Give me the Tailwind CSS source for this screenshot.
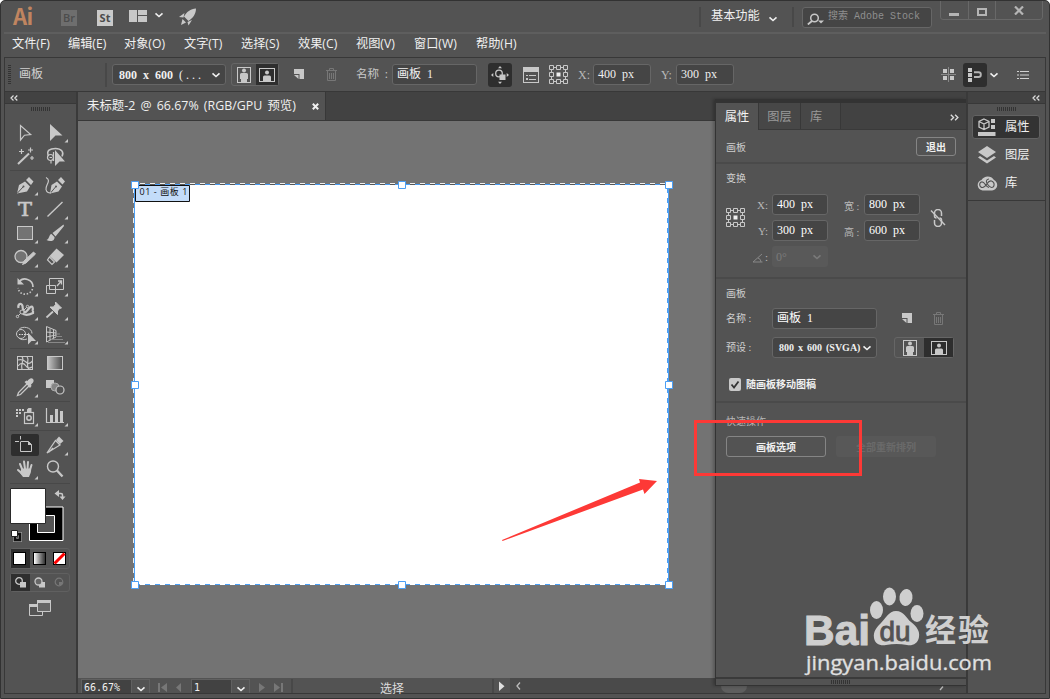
<!doctype html>
<html lang="zh-CN">

<head>
  <meta charset="utf-8">
  <title>未标题-2</title>
  <script src="https://cdn.jsdelivr.net/npm/@tailwindcss/browser@4"></script>
</head>

<body class="bg-white overflow-hidden">
  <!-- shared icons -->
  <svg class="hidden">
    <symbol id="corner" viewBox="0 0 30 24"><path d="M28 19v3.500h-3.500z" fill="#c8c8c8" /></symbol>
    <symbol id="chevron" viewBox="0 0 10 8"><path d="M1.500 2.300L5 5.500l3.500-3.200" fill="none" stroke="currentColor" stroke-width="1.600" /></symbol>
    <symbol id="dbl" viewBox="0 0 8 8"><path d="M3.500 1.500L1 4l2.500 2.500M7.300 1.500L4.800 4l2.500 2.500" fill="none" stroke="currentColor" stroke-width="1.200" /></symbol>
    <symbol id="grip" viewBox="0 0 20 4"><path d="M.5 0v4M2.500 0v4M4.500 0v4M6.500 0v4M8.500 0v4M10.500 0v4M12.500 0v4M14.500 0v4M16.500 0v4M18.500 0v4" stroke="#333" /></symbol>
    <symbol id="portrait" viewBox="0 0 14 16"><rect x=".5" y=".5" width="13" height="15" fill="none" stroke="currentColor" /><circle cx="7" cy="3.500" r="2" fill="currentColor" /><path d="M3 7.500q0-1.500 1.500-1.500h5Q11 6 11 7.500V12H10v3.500H4V12H3z" fill="currentColor" /></symbol>
    <symbol id="landscape" viewBox="0 0 16 14"><rect x=".5" y=".5" width="15" height="13" fill="none" stroke="currentColor" /><circle cx="8" cy="4.500" r="2" fill="currentColor" /><path d="M4 13V9Q4 7.500 5.500 7.500h5Q12 7.500 12 9v4z" fill="currentColor" /></symbol>
    <symbol id="new" viewBox="0 0 10 10"><path d="M0 0h10v10H5.500V5H0z" fill="#c8c8c8" /><path d="M0 6h4.500v4z" fill="#c8c8c8" /></symbol>
    <symbol id="trash" viewBox="0 0 11 13"><path d="M0 2.500h11M3.500 2.500v-2h4v2M1.500 3v9.500h8V3M3.500 5v6M5.500 5v6M7.500 5v6" fill="none" stroke="#777" /></symbol>
    <symbol id="ref" viewBox="0 0 19 19"><path d="M2.500 2.500h14v14h-14z" fill="none" stroke="#c8c8c8" stroke-width="1" /><g fill="#535353" stroke="#c8c8c8"><path d="M.5.500h4v4h-4zM7.500.500h4v4h-4zM14.500.500h4v4h-4zM.5 7.500h4v4h-4zM14.500 7.500h4v4h-4zM.5 14.500h4v4h-4zM7.500 14.500h4v4h-4zM14.500 14.500h4v4h-4z" /></g><path d="M7.500 7.500h4v4h-4z" fill="#f0f0f0" /></symbol>
  </svg>

  <div class="relative w-[1050px] h-[699px] bg-[#535353] border border-[#323232] rounded-t-[5px] overflow-hidden flex flex-col text-[12px] leading-none text-[#f0f0f0] font-['Open_Sans','Noto_Sans_CJK_SC',sans-serif] whitespace-nowrap">

    <!-- title bar -->
    <header class="h-[31px] shrink-0 flex items-center pl-3">
      <div class="w-5 -mt-1 text-[22px] leading-[28px] font-bold text-[#c08560] font-['Noto_Sans_CJK_SC',sans-serif] tracking-[-0.5px]">Ai</div>
      <div class="ml-7 mt-0.5 w-4 h-4 bg-[#6e6e6e] text-[#4c4c4c] font-semibold text-[11px] flex items-center justify-center">Br</div>
      <div class="ml-5 mt-0.5 w-4 h-4 bg-[#cacaca] text-[#4c4c4c] font-bold text-[11px] flex items-center justify-center">St</div>
      <svg class="ml-4 -mt-0.5 w-[18px] h-3" viewBox="0 0 18 12"><path d="M0 0h8v12H0zM9 0h9v5H9zM9 6h9v6H9z" fill="#c8c8c8" /></svg>
      <svg class="ml-[7px] -mt-1 w-2.5 h-2 text-[#eee]"><use href="#chevron" /></svg>
      <svg class="ml-[15px] w-[18px] h-[18px]" viewBox="0 0 18 18"><path d="M17 .5C11.500 1 7.500 4 5 8.500L9.500 13C14 10 17 6 17 .5zM5.500 5L0 9l4.500 .5zM13 12L9.500 17.500 8.500 14zM3.500 11l3.500 3.500-5 2.500z" fill="#c8c8c8" /></svg>
      <div class="ml-auto flex items-center self-stretch">
        <div class="w-0.5 h-5 bg-[#484848]"></div>
        <div class="ml-2.5 w-[49px] text-[12.200px]">基本功能</div>
        <svg class="ml-2 mt-1 w-2.5 h-2 text-[#eee]"><use href="#chevron" /></svg>
        <div class="ml-3.5 w-0.5 h-5 bg-[#484848]"></div>
        <div class="ml-2 mt-0.5 w-[130px] h-[21px] rounded-[3px] border border-[#666] bg-[#454545] flex items-center pl-1 pb-0.5 text-[10px] text-[#8f8f8f] font-['Liberation_Mono','Noto_Sans_CJK_SC',monospace]">
          <svg class="w-[17px] h-3 mr-1 mt-1" viewBox="0 0 17 12"><circle cx="7.500" cy="5" r="3.800" fill="none" stroke="#c8c8c8" stroke-width="1.500" /><path d="M5 8L.8 11.500" stroke="#c8c8c8" stroke-width="1.800" /><path d="M11 7.500h6l-3 3z" fill="#c8c8c8" /></svg>
          搜索 Adobe Stock
        </div>
        <div class="ml-2 mr-[6px] self-start w-[103px] h-5 -mt-px rounded-b-[3px] border border-[#686868] flex">
          <div class="w-[28px] border-r border-[#686868] pt-3 pl-2"><div class="w-2.5 h-[3px] bg-[#b5b5b5]"></div></div>
          <div class="w-[27px] border-r border-[#686868] pt-[7px] pl-2"><div class="w-2.5 h-2 border-2 border-[#b5b5b5]"></div></div>
          <svg class="ml-[18px] mt-[5px] w-2.5 h-[9px]" viewBox="0 0 10 9"><path d="M1 .5l8 8M9 .5l-8 8" stroke="#b5b5b5" stroke-width="2.200" /></svg>
        </div>
      </div>
    </header>

    <!-- menus -->
    <nav class="h-[25px] mx-[3px] shrink-0 border-t-2 border-[#5e5e5e] flex items-center pl-2 pb-0.5 text-[12.200px]">
      <div class="w-[56px]">文件(F)</div>
      <div class="w-[56px]">编辑(E)</div>
      <div class="w-[60px]">对象(O)</div>
      <div class="w-[57px]">文字(T)</div>
      <div class="w-[57px]">选择(S)</div>
      <div class="w-[58px]">效果(C)</div>
      <div class="w-[58px]">视图(V)</div>
      <div class="w-[62px]">窗口(W)</div>
      <div>帮助(H)</div>
    </nav>

    <!-- control bar -->
    <div class="mx-[3px] h-[34px] shrink-0 border border-b-0 border-[#383838] flex items-center pl-[3px] text-[12px] font-['Liberation_Serif','Noto_Sans_CJK_SC',serif] [word-spacing:3px]">
      <svg class="w-[3px] h-5" viewBox="0 0 3 20"><path d="M1.500 0v20" stroke="#333" stroke-width="3" stroke-dasharray="1 1" /></svg>
      <div class="ml-2 w-[86px] text-[#d0d0d0] -mt-0.5">画板</div>
      <div class="w-0.5 h-6 bg-[#484848]"></div>
      <div class="ml-[5px] w-[114px] h-[21px] rounded-[3px] border border-[#666] bg-[#454545] flex items-center justify-between pl-1.5 pr-1 font-bold">
        <span>800 x 600 <span class="tracking-[3px] font-normal">(...</span></span>
        <svg class="w-2.5 h-2"><use href="#chevron" /></svg>
      </div>
      <div class="ml-[5px] w-12 h-[23px] rounded-[3px] border border-[#666] flex text-[#c8c8c8]">
        <div class="w-6 flex items-center justify-center"><svg class="w-3.5 h-4"><use href="#portrait" /></svg></div>
        <div class="grow bg-[#2e2e2e] flex items-center justify-center"><svg class="w-4 h-3.5"><use href="#landscape" /></svg></div>
      </div>
      <svg class="ml-[15px] -mt-px w-2.5 h-2.5"><use href="#new" /></svg>
      <svg class="ml-[22px] w-[11px] h-[13px]"><use href="#trash" /></svg>
      <div class="ml-[19px] w-[36px] text-[11.500px] text-[#c8c8c8]">名称 :</div>
      <div class="w-[85px] h-[21px] rounded-[3px] border border-[#666] bg-[#454545] flex items-center pl-1 pb-0.5">画板 1</div>
      <div class="ml-[11px] w-6 h-6 rounded-[3px] bg-[#2e2e2e] flex items-center justify-center">
        <svg class="w-[18px] h-[18px]" viewBox="0 0 18 18" fill="#c8c8c8"><circle cx="8" cy="7.500" r="3.300" fill="none" stroke="#c8c8c8" stroke-width="1.300" /><path d="M8.500 8.500H14.500V14H8.500zM0 9l2.300-2v4zM18 9l-2.300-2v4zM9 0l2 2.300H7zM9 18l2-2.300H7z" /></svg>
      </div>
      <svg class="ml-[11px] w-4 h-4" viewBox="0 0 16 16"><rect x=".5" y=".5" width="15" height="15" fill="none" stroke="#c8c8c8" /><path d="M0 0h16v5H0zM3 8h2v1H3zM3 11h2v2H3zM6 8h7v1H6zM6 12h7v1H6z" fill="#c8c8c8" /></svg>
      <svg class="ml-2.5 w-[19px] h-[19px]"><use href="#ref" /></svg>
      <div class="ml-2.5 w-[15px] text-[#b8b8b8]">X:</div>
      <div class="w-[58px] h-[21px] rounded-[3px] border border-[#666] bg-[#454545] flex items-center pl-1 pb-0.5">400 px</div>
      <div class="ml-2.5 w-[15px] text-[#b8b8b8]">Y:</div>
      <div class="w-[58px] h-[21px] rounded-[3px] border border-[#666] bg-[#454545] flex items-center pl-1 pb-0.5">300 px</div>
      <div class="ml-auto flex items-center pr-4">
        <svg class="w-[15px] h-[15px]" viewBox="0 0 15 15"><path d="M7.500 0v15M0 7.500h15" stroke="#888" /><path d="M2 2h4v4H2zM9 2h4v4H9zM2 9h4v4H2zM9 9h4v4H9z" fill="#c8c8c8" /></svg>
        <div class="ml-[7px] w-6 h-6 rounded-[3px] bg-[#2e2e2e] flex items-center justify-center">
          <svg class="w-4 h-[14px]" viewBox="0 0 16 14"><path d="M1 0h4v4H1zM1 5h4v4H1zM1 10h4v4H1z" fill="#c8c8c8" /><path d="M7 4.300h4.500a2.300 2.300 0 010 4.700H7" fill="none" stroke="#b5b5b5" stroke-width="1.900" /></svg>
        </div>
        <svg class="ml-0.5 w-2.5 h-2"><use href="#chevron" /></svg>
        <svg class="ml-[18px] w-3 h-2.5" viewBox="0 0 12 10"><path d="M0 1.500h2M3 1.500h9M0 5h2M3 5h9M0 8.500h2M3 8.500h9" stroke="#d0d0d0" stroke-width="1.200" /></svg>
      </div>
    </div>

    <div class="mx-[3px] h-[603px] shrink-0 border border-[#383838] flex">

      <!-- tool box -->
      <aside class="w-[73px] shrink-0 border-r-2 border-[#3a3a3a]">
        <div class="h-[12px] bg-[#424242] border-b border-[#383838] flex items-center pl-[5px]"><svg class="w-2 h-2 text-[#ddd]"><use href="#dbl" /></svg></div>
        <div class="flex justify-center pt-[3px] h-4"><svg class="w-5 h-1"><use href="#grip" /></svg></div>
        <div class="w-[60px] ml-[5px]">
          <div class="grid grid-cols-2">
            <svg class="w-[30px] h-6" viewBox="0 0 30 24"><path d="M10.500 5.500v14.500l4-4.800 6.200-.6z" fill="none" stroke="#c8c8c8" stroke-width="1.200" /></svg>
            <svg class="w-[30px] h-6" viewBox="0 0 30 24"><path d="M10 4v17l5.500-5.500h7z" fill="#c8c8c8" /><use href="#corner" /></svg>
            <svg class="w-[30px] h-6" viewBox="0 0 30 24"><path d="M8 20L19 9.500" stroke="#c8c8c8" stroke-width="2" /><path d="M11.500 5v5M9 7.500h5M20.500 3.500v5M18 6h5M22 12v4M20 14h4" stroke="#c8c8c8" stroke-width="1.200" /></svg>
            <svg class="w-[30px] h-6" viewBox="0 0 30 24"><path d="M8.500 12C6 6.500 10 4.500 15.500 4.500s9 3.500 6.500 8" fill="none" stroke="#c8c8c8" stroke-width="1.500" /><circle cx="10.500" cy="13.500" r="3" fill="none" stroke="#c8c8c8" stroke-width="1.200" /><path d="M9.500 13.500h2.500M13.500 8v9M11 16.500v3" stroke="#c8c8c8" stroke-width="1.200" /><path d="M15 6v16l4.500-4.500H25z" fill="#c8c8c8" /></svg>
          </div>
          <div class="my-0.5 h-px bg-[#484848]"></div>
          <div class="grid grid-cols-2">
            <svg class="w-[30px] h-6" viewBox="0 0 30 24"><path d="M7 20.500l2-8.500 6-3.500 5 5-3 5zM16 7l3-3 4.500 4.500L21 12z" fill="#c8c8c8" /><path d="M7.500 20l5.500-6" stroke="#535353" /><circle cx="13.500" cy="13.500" r="1" fill="#535353" /><use href="#corner" /></svg>
            <svg class="w-[30px] h-6" viewBox="0 0 30 24"><path d="M10 20.500l1.500-8.500L17 8.500l5 5-3.500 5zM18 7L21 4l4 4.500-2.500 3z" fill="#c8c8c8" /><path d="M10.500 20l5-6" stroke="#535353" /><circle cx="16" cy="13.500" r="1" fill="#535353" /><path d="M6 4.500c6 3-1 8 0 12 .5 3 3.500 4 5 3" fill="none" stroke="#c8c8c8" stroke-width="1.200" /></svg>
            <svg class="w-[30px] h-6" viewBox="0 0 30 24"><text x="8" y="19" class="text-[19px] font-['DejaVu_Serif',serif]" fill="#c8c8c8" stroke="#c8c8c8" stroke-width=".6" textLength="14" lengthAdjust="spacingAndGlyphs">T</text><use href="#corner" /></svg>
            <svg class="w-[30px] h-6" viewBox="0 0 30 24"><path d="M7.500 19.500l15-14.500" stroke="#c8c8c8" stroke-width="1.400" /><use href="#corner" /></svg>
            <svg class="w-[30px] h-6" viewBox="0 0 30 24"><rect x="7.500" y="5.500" width="15" height="13" fill="#737373" stroke="#c8c8c8" /><use href="#corner" /></svg>
            <svg class="w-[30px] h-6" viewBox="0 0 30 24"><path d="M23.500 3.500L12.500 12l3 3.500L24 5zM11.500 13c-2.500 0-2 5-5 6 3 2 8.500 1.500 8-3z" fill="#c8c8c8" /><use href="#corner" /></svg>
            <svg class="w-[30px] h-6" viewBox="0 0 30 24"><circle cx="11" cy="11.500" r="6" fill="#737373" stroke="#c8c8c8" stroke-width="1.300" /><path d="M12.500 19.500l2-4 9-8.500 2 2-9.500 9z" fill="#c8c8c8" stroke="#c8c8c8" /><use href="#corner" /></svg>
            <svg class="w-[30px] h-6" viewBox="0 0 30 24"><path d="M16.500 3.500l7.500 6.500-7.500 7.500-7-6.500z" fill="#c8c8c8" /><path d="M9.500 12l5 5-2.500 2.500L7.500 15z" fill="none" stroke="#c8c8c8" stroke-width="1.200" /><use href="#corner" /></svg>
          </div>
          <div class="my-0.5 h-px bg-[#484848]"></div>
          <div class="grid grid-cols-2">
            <svg class="w-[30px] h-6" viewBox="0 0 30 24"><path d="M9 8c4-5.500 14-3 14 5" fill="none" stroke="#c8c8c8" stroke-width="1.700" /><path d="M22.500 15c-2.500 7-13 7-14.500-1" fill="none" stroke="#c8c8c8" stroke-width="1.600" stroke-dasharray="1.500 1.700" /><path d="M7.500 4V10.500H14z" fill="#c8c8c8" /><use href="#corner" /></svg>
            <svg class="w-[30px] h-6" viewBox="0 0 30 24"><path d="M9.500 4.500h14v11h-14zM6.500 11.500h9v8h-9z" fill="none" stroke="#c8c8c8" /><path d="M17 12l4-4.500M18 7h3.500v3.500" fill="none" stroke="#c8c8c8" stroke-width="1.300" /><use href="#corner" /></svg>
            <svg class="w-[30px] h-6" viewBox="0 0 30 24"><path d="M8.500 10c-1-4 3-6 4-2 .5 3 0 5 2 6s4-4 6-5 3 1 2 4M12 15c3 3 7 2 11 0v-2" fill="none" stroke="#c8c8c8" stroke-width="2.200" /><path d="M7.500 18.500L17.500 8.500" stroke="#c8c8c8" /><g fill="#535353" stroke="#c8c8c8"><circle cx="7.500" cy="18.500" r="1.200" /><circle cx="12" cy="14" r="2" /><circle cx="17.500" cy="8.500" r="1.200" /></g><use href="#corner" /></svg>
            <svg class="w-[30px] h-6" viewBox="0 0 30 24"><path d="M15.500 4l6 6-2 .5-2 2.500v3.500L10 9h3.500l2-2.500z" fill="#c8c8c8" stroke="#c8c8c8" /><path d="M13 13.500l-6.500 6" stroke="#c8c8c8" stroke-width="1.800" /><use href="#corner" /></svg>
            <svg class="w-[30px] h-6" viewBox="0 0 30 24"><ellipse cx="11" cy="12" rx="4.500" ry="4.500" fill="none" stroke="#c8c8c8" /><path d="M9 7.500c3-4 13-2.500 13 4M9 16c2 2 5 2 8 1" fill="none" stroke="#c8c8c8" /><path d="M9 12.500h9" stroke="#ddd" stroke-dasharray="1.500 1" /><path d="M18 10.500v12l3.500-3.500H26z" fill="#c8c8c8" /><use href="#corner" /></svg>
            <svg class="w-[30px] h-6" viewBox="0 0 30 24"><path d="M6.500 4.500v15.500L16 15V8.500zM10 6.500v11.500M13.500 7.500v8.500M6.500 10l9.500 1M6.500 15l9.500-2" fill="none" stroke="#c8c8c8" /><path d="M16 12h4M15 14.500h7M11 17.500h12M8 20.500h17" stroke="#888" /><use href="#corner" /></svg>
          </div>
          <div class="my-0.5 h-px bg-[#484848]"></div>
          <div class="grid grid-cols-2">
            <svg class="w-[30px] h-6" viewBox="0 0 30 24"><rect x="7.500" y="5.500" width="15" height="13" fill="none" stroke="#c8c8c8" /><path d="M8 9c4-1 6 0 8 2s4 2 6.500-1M8 15c3-4 6-3 8 0s4 2 6.500 1M12 5.500c3 4-2 7 0 13M17 5.500c3 4-2 8 2 13" fill="none" stroke="#c8c8c8" stroke-width="1.200" /></svg>
            <svg class="w-[30px] h-6" viewBox="0 0 30 24"><defs><linearGradient id="gr"><stop stop-color="#c8c8c8" /><stop offset="1" stop-color="#4a4a4a" /></linearGradient></defs><rect x="7.500" y="5.500" width="15" height="13" fill="url(#gr)" stroke="#c8c8c8" /></svg>
            <svg class="w-[30px] h-6" viewBox="0 0 30 24"><path d="M17 9l-8.500 8.500-1 3 3-1L19 11" fill="none" stroke="#c8c8c8" stroke-width="1.300" /><path d="M14.500 7l2-1.500 1 .5c1-2 4-4 5.500-2s0 4-2 5.500l.5 1.500-1.500 2z" fill="#c8c8c8" /><use href="#corner" /></svg>
            <svg class="w-[30px] h-6" viewBox="0 0 30 24"><path d="M6 5h8v8H6z" fill="#c8c8c8" /><circle cx="15" cy="12" r="4" fill="#858585" stroke="#aaa" /><circle cx="20" cy="15" r="4" fill="#535353" stroke="#c8c8c8" stroke-width="1.200" /></svg>
          </div>
          <div class="my-0.5 h-px bg-[#484848]"></div>
          <div class="grid grid-cols-2">
            <svg class="w-[30px] h-6" viewBox="0 0 30 24"><path d="M6 5h2v2H6zM9 5h2v2H9zM12 5h2v2h-2zM6 8h2v2H6zM9 8h2v2H9zM6 11h2v2H6zM17 5.500L18.500 4h3v4h-4.500z" fill="#c8c8c8" /><rect x="14.500" y="8.500" width="9" height="11" fill="none" stroke="#c8c8c8" stroke-width="1.200" /><circle cx="19" cy="14" r="2.200" fill="none" stroke="#c8c8c8" stroke-width="1.500" /><use href="#corner" /></svg>
            <svg class="w-[30px] h-6" viewBox="0 0 30 24"><path d="M6.500 4v14.500H24" fill="none" stroke="#c8c8c8" stroke-width="1.200" /><path d="M10 11h3v7h-3zM15 5h3v13h-3zM20 7h3v11h-3z" fill="#c8c8c8" /><use href="#corner" /></svg>
          </div>
          <div class="my-0.5 h-px bg-[#484848]"></div>
          <div class="grid grid-cols-2">
            <svg class="w-[30px] h-6" viewBox="0 0 30 24"><rect x="1" y="1" width="28" height="22" rx="2" fill="#2e2e2e" /><path d="M10.500 3v3.500M5 8.500h4M10.500 9v9.500h11v-7l-3-3h-8" fill="none" stroke="#c8c8c8" /><path d="M18 8v4h4z" fill="#c8c8c8" /></svg>
            <svg class="w-[30px] h-6" viewBox="0 0 30 24"><path d="M7 20l8.500-12.500 4.500 4.500zM13 15l-4 4" fill="none" stroke="#c8c8c8" stroke-width="1.300" /><path d="M16 7l3-3.500 4.500 4.500-3.500 3z" fill="#c8c8c8" /><use href="#corner" /></svg>
            <svg class="w-[30px] h-6" viewBox="0 0 30 24"><path d="M8 13l4.500 4M12.500 13L10 7M15 12l-1-7.500M17.500 12L18 5M20 13l1.500-5" fill="none" stroke="#c8c8c8" stroke-width="2" stroke-linecap="round" /><path d="M11.500 11.500h9.500c.5 4-1 5.500-2 8.500h-6l-3-4z" fill="#c8c8c8" /><use href="#corner" /></svg>
            <svg class="w-[30px] h-6" viewBox="0 0 30 24"><circle cx="13" cy="9.500" r="5.500" fill="none" stroke="#c8c8c8" stroke-width="1.400" /><path d="M17 13.500l5.500 6" stroke="#c8c8c8" stroke-width="2.300" /></svg>
          </div>
          <div class="my-0.5 h-px bg-[#484848]"></div>
          <!-- fill and stroke -->
          <svg class="w-[60px] h-[60px]" viewBox="0 0 60 60">
            <path d="M19.500 21h33.500v33.500H19.500z" fill="#000" stroke="#fff" />
            <path d="M27.500 29.500h17v17h-17z" fill="#535353" stroke="#fff" />
            <path d="M.5 2.500h35v35h-35z" fill="#fff" stroke="#2a2a2a" />
            <path d="M48 7.500h3q1.500 0 1.500 1.500v2" fill="none" stroke="#c8c8c8" stroke-width="1.500" /><path d="M49 4v7l-4.500-3.500zM49.500 10.500h6L52.500 14z" fill="#c8c8c8" />
            <path d="M5 48h5v6H5z" fill="none" stroke="#999" stroke-width="4" /><path d="M5 48h5v6H5z" fill="none" stroke="#111" stroke-width="2.500" /><path d="M1.500 44.500H7.500V50.500H1.500z" fill="#fff" stroke="#222" />
          </svg>
          <div class="mt-0.5 w-[60px] h-[21px] rounded-[3px] border border-[#606060] grid grid-cols-3 place-items-center">
            <div class="w-full h-full bg-[#2e2e2e] flex items-center pl-0.5"><div class="w-[13px] h-[13px] bg-white border border-black"></div></div>
            <div class="w-[13px] h-[13px] bg-linear-to-r from-white to-[#333] border border-black"></div>
            <svg class="w-[13px] h-[13px]" viewBox="0 0 13 13"><rect x=".5" y=".5" width="12" height="12" fill="#fff" stroke="#000" /><path d="M1.500 11.500l10-10" stroke="#f00" stroke-width="3" /></svg>
          </div>
          <div class="mt-1 w-[60px] h-[19px] rounded-[3px] border border-[#606060] grid grid-cols-3 place-items-center">
            <div class="w-full h-full bg-[#2e2e2e] flex items-center justify-center"><svg class="w-[11px] h-[11px]" viewBox="0 0 11 11"><circle cx="4" cy="4" r="3.300" fill="none" stroke="#c8c8c8" stroke-width="1.300" /><path d="M5 5h6v5.500H5z" fill="#c8c8c8" /></svg></div>
            <svg class="w-[11px] h-[11px]" viewBox="0 0 11 11"><path d="M5 5h6v5.500H5z" fill="#c8c8c8" /><circle cx="4.500" cy="4.500" r="3.500" fill="#666" stroke="#c8c8c8" stroke-width="1.300" /></svg>
            <svg class="w-[11px] h-[11px]" viewBox="0 0 11 11"><circle cx="5" cy="5" r="3.800" fill="none" stroke="#777" stroke-width="1.200" /><path d="M5 5h3v3H5z" fill="#777" /></svg>
          </div>
          <svg class="mt-2 ml-[19px] w-[23px] h-[17px]" viewBox="0 0 23 17"><path d="M.5 4.500h13v11H.5z" fill="#535353" stroke="#c8c8c8" /><path d="M0 4h10v3H0z" fill="#c8c8c8" /><path d="M8.500.500h13v11h-13z" fill="#666" stroke="#c8c8c8" /><path d="M8 0h14v3H8z" fill="#c8c8c8" /></svg>
        </div>
      </aside>

      <!-- document -->
      <main class="w-[888px] shrink-0 flex flex-col">
        <div class="h-[29px] bg-[#424242] border-b border-[#383838] flex">
          <div class="w-[248px] bg-[#535353] border-r border-[#383838] flex items-center pl-[9px] pr-1.5 pt-px">
            <span class="w-[212px] text-[12.400px] [word-spacing:2px]">未标题-2 @ 66.67% (RGB/GPU 预览)</span>
            <svg class="ml-[13px] w-[7px] h-[7px]" viewBox="0 0 7 7"><path d="M.8.800l5.400 5.400M6.200.800L.8 6.200" stroke="#f0f0f0" stroke-width="2" /></svg>
          </div>
        </div>
        <div class="h-[557px] bg-[#737373]">
          <svg class="w-[637px] h-[557px]" viewBox="78 121 637 557">
            <path d="M134 184h535v401H134z" fill="#fff" />
            <path d="M134.500 184v401M668.500 184v401" fill="none" stroke="#4b9ff5" />
            <path d="M133.500 188v394M140 183.500h526" fill="none" stroke="#eee" stroke-dasharray="5 5" />
            <path d="M135 184.500h532M135 584.500h532M667.500 188v394" fill="none" stroke="#4b9ff5" stroke-dasharray="5 5" />
            <path d="M140 184.500h526" fill="none" stroke="#555" stroke-dasharray="5 5" />
            <path d="M135.500 185.500h54v16h-54z" fill="#c3dcf9" stroke="#111" />
            <text x="139.500" y="195" class="text-[9px]" fill="#111" textLength="48">01 - 画板 1</text>
            <g fill="#fff" stroke="#4b9ff5"><path d="M131.500 181.500h7v7h-7zM398.500 181.500h7v7h-7zM665.500 181.500h7v7h-7zM131.500 381.500h7v7h-7zM665.500 381.500h7v7h-7zM131.500 581.500h7v7h-7zM398.500 581.500h7v7h-7zM665.500 581.500h7v7h-7z" /></g>
            <path d="M502 540L640 482.500l-1-3.500 18 2-12.500 13-1.500-4.500L502.500 541z" fill="#fd3936" />
          </svg>
        </div>
        <!-- status bar -->
        <div class="h-[15px] flex items-stretch bg-[#4a4a4a] font-['DejaVu_Sans_Mono',monospace] text-[10px]">
          <div class="pl-[3px] w-[432px] bg-[#535353] flex items-stretch pt-px">
            <div class="w-[51px] bg-[#424242] border border-b-0 border-[#606060] flex items-center pl-0.5 pt-0.5">66.67%</div>
            <div class="w-[18px] border border-b-0 border-l-0 border-[#606060] flex items-center justify-center pt-1"><svg class="w-2.5 h-2"><use href="#chevron" /></svg></div>
            <svg class="w-[41px] h-[15px]" viewBox="0 0 41 15"><path d="M8 4h2v9H8zM17 4v9l-6-4.500zM31 4v9l-5-4.500z" fill="#777" /></svg>
            <div class="w-[41px] bg-[#424242] border border-b-0 border-[#606060] flex items-center pl-0.5 pt-0.5">1</div>
            <div class="w-[18px] border border-b-0 border-l-0 border-[#606060] flex items-center justify-center pt-1"><svg class="w-2.5 h-2"><use href="#chevron" /></svg></div>
            <svg class="w-[41px] h-[15px]" viewBox="0 0 41 15"><path d="M9 4v9l6-4.500zM24 4v9l6-4.500zM31 4h2v9h-2z" fill="#777" /></svg>
            <div class="w-0.5 bg-[#484848]"></div>
            <div class="ml-[87px] text-[12px] pt-[3px] text-[#ddd] font-['Noto_Sans_CJK_SC',sans-serif]">选择</div>
            <div class="w-0.5 bg-[#484848] ml-auto mr-[16px]"></div>
          </div>
          <svg class="-ml-4 w-[34px] h-[15px]" viewBox="0 0 34 15"><path d="M5 3.500v9.500l5.500-4.800z" fill="#e0e0e0" /><path d="M26 4.500L23 8l3 3.500" fill="none" stroke="#bbb" stroke-width="1.300" /></svg>
          <div class="ml-[193px] mt-px w-[26px] h-[14px] rounded-full bg-[#5e5e5e]"></div>
          <svg class="ml-[190px] w-2 h-[15px]" viewBox="0 0 8 15"><path d="M3 12l3-3.500" stroke="#bbb" stroke-width="1.300" /></svg>
        </div>
      </main>

      <!-- dock -->
      <aside class="grow border-l-2 border-[#3a3a3a] text-[12.300px]">
        <div class="h-[12px] bg-[#424242] border-b border-[#383838] flex items-center justify-end pr-[5px]"><svg class="w-2 h-2 text-[#ddd]"><use href="#dbl" /></svg></div>
        <div class="flex justify-center pt-[3px] h-[11px]"><svg class="w-5 h-1"><use href="#grip" /></svg></div>
        <div class="ml-1 w-[68px] h-6 rounded-[3px] bg-[#333] border border-[#626262] flex items-center pl-[5px]">
          <svg class="w-[18px] h-[18px] mr-[9px]" viewBox="0 0 18 18"><path d="M6 1l5 2.500v5.500l-5 2.500-5-2.500V3.500zM1 3.500L6 6l5-2.500M6 6v5.500" fill="none" stroke="#c8c8c8" stroke-width="1.300" /><path d="M13 1h4v4h-4zM13 7h4v4h-4zM0 14h17.500v4H0z" fill="#c8c8c8" /></svg>
          属性
        </div>
        <div class="ml-1 mt-1 h-6 flex items-center pl-1.5">
          <svg class="w-[18px] h-[18px] mr-[9px]" viewBox="0 0 18 18"><path d="M9 0l9 6-9 6-9-6zM2 10L0 11.500 9 17.500l9-6L16 10l-7 4.500z" fill="#c8c8c8" /></svg>
          图层
        </div>
        <div class="ml-1 mt-1 h-6 flex items-center pl-1">
          <svg class="w-[22px] h-4 mr-[7px]" viewBox="0 0 22 16"><path d="M6.500 15.500a6 5.500 0 01-1-10.500C8 .5 15 0 18 5c5 2.500 4 10-2 10.500z" fill="#c8c8c8" /><path d="M13 12.500c-3 0-4.500-6.500-7.500-5.500s-2 5.500 1 5.500c4 0 5-8 9-6.500 4 1.500 3 6.500 0 6.500-2 0-3-2-4.500-4C9.500 6 11 4 13 4" fill="none" stroke="#535353" stroke-width="1.100" /></svg>
          库
        </div>
        <div class="mt-[5px] h-px bg-[#383838]"></div>
      </aside>
    </div>

    <!-- properties panel -->
    <section class="absolute left-[714px] top-[98px] w-[251px] h-[587px] bg-[#535353] border-l border-t-4 border-b border-[#333] shadow-[-2px_0_3px_rgba(0,0,0,0.25)] flex flex-col text-[10px] text-[#cfcfcf] font-['Liberation_Serif','Noto_Sans_CJK_SC',serif]">
      <div class="h-[27px] shrink-0 bg-[#424242] flex text-[12.200px] text-[#999] border-b border-[#3a3a3a]">
        <div class="w-[43px] h-[27px] bg-[#535353] text-[#f5f5f5] border-r border-[#383838] flex items-center justify-center pt-px">属性</div>
        <div class="w-[42px] bg-[#474747] border-r border-[#383838] flex items-center justify-center pt-0.5">图层</div>
        <div class="w-[40px] bg-[#474747] border-r border-[#383838] flex items-center pl-[9px] pt-0.5">库</div>
        <svg class="ml-auto mr-[7px] mt-2.5 w-[9px] h-[9px] text-[#ddd] rotate-180"><use href="#dbl" /></svg>
      </div>
      <div class="h-8 shrink-0 flex items-center justify-between pl-2.5 pr-2.5">
        <span class="pt-1">画板</span>
        <div class="w-10 h-[19px] mt-px rounded-[3px] border border-[#858585] flex items-center justify-center pt-0.5 font-bold text-[#f0f0f0]">退出</div>
      </div>
      <div class="h-0.5 shrink-0 bg-[#4a4a4a]"></div>

      <div class="h-[113px] shrink-0 pl-2.5 pt-2.5">
        <div>变换</div>
        <div class="flex mt-2.5 text-[12px] [word-spacing:3px] text-[#b8b8b8]">
          <svg class="w-[19px] h-[19px] mt-3.5"><use href="#ref" /></svg>
          <div class="ml-[9px] w-[18px] flex flex-col gap-[5px] items-end text-[11px] [&>div]:h-[21px] [&>div]:flex [&>div]:items-center [&>div]:pr-1 [&>div]:pt-0.5">
            <div>X:</div>
            <div>Y:</div>
            <div><svg class="w-[11px] h-2.5 mr-0.5" viewBox="0 0 11 10"><path d="M10 1L1 9h9.500M6 5q3 1 3 4" fill="none" stroke="#888" /></svg>:</div>
          </div>
          <div class="flex flex-col gap-[5px] w-[56px] text-white">
            <div class="h-[21px] rounded-[3px] border border-[#666] bg-[#454545] flex items-center pl-1 pb-0.5">400 px</div>
            <div class="h-[21px] rounded-[3px] border border-[#666] bg-[#454545] flex items-center pl-1 pb-0.5">300 px</div>
            <div class="h-[21px] rounded-[3px] bg-[#595959] text-[#7a7a7a] flex items-center justify-between pl-1 pr-1.5">0° <svg class="w-2.5 h-2"><use href="#chevron" /></svg></div>
          </div>
          <div class="ml-4 w-5 flex flex-col gap-[5px] text-[10px] [&>div]:h-[21px] [&>div]:flex [&>div]:items-center [&>div]:pt-1 [word-spacing:0px]">
            <div>宽 :</div>
            <div>高 :</div>
          </div>
          <div class="flex flex-col gap-[5px] w-[56px] text-white">
            <div class="h-[21px] rounded-[3px] border border-[#666] bg-[#454545] flex items-center pl-1 pb-0.5">800 px</div>
            <div class="h-[21px] rounded-[3px] border border-[#666] bg-[#454545] flex items-center pl-1 pb-0.5">600 px</div>
          </div>
          <svg class="ml-2.5 mt-[15px] w-4 h-[18px]" viewBox="0 0 16 18"><path d="M4.500 7V4a3 3 0 017 0v3M4.500 11v3a3 3 0 007 0v-3M4.500 7q0 2 2 2M11.500 11q0-2-2-2" fill="none" stroke="#c8c8c8" stroke-width="1.500" /><path d="M1 1.500l14 14.500" stroke="#c8c8c8" stroke-width="1.400" /></svg>
        </div>
      </div>
      <div class="h-0.5 shrink-0 bg-[#4a4a4a]"></div>

      <div class="h-[122px] shrink-0 pl-2.5 pt-2.5">
        <div>画板</div>
        <div class="mt-[9px] flex items-center">
          <div class="w-[46px]">名称 :</div>
          <div class="w-[105px] h-[21px] rounded-[3px] border border-[#666] bg-[#454545] flex items-center pl-1 pb-0.5 text-[12px] text-white [word-spacing:3px]">画板 1</div>
          <svg class="ml-[25px] -mt-px w-2.5 h-2.5"><use href="#new" /></svg>
          <svg class="ml-[21px] w-[11px] h-[13px]"><use href="#trash" /></svg>
        </div>
        <div class="mt-2 flex items-center">
          <div class="w-[46px]">预设 :</div>
          <div class="w-[105px] h-[21px] rounded-[3px] border border-[#666] bg-[#454545] flex items-center justify-between pl-1.5 pr-1 text-[10px] font-bold text-[#f0f0f0] [word-spacing:1.500px]">800 x 600 (SVGA)<svg class="w-2.5 h-2"><use href="#chevron" /></svg></div>
          <div class="ml-[17px] w-[60px] h-[21px] rounded-[3px] border border-[#666] flex text-[#c8c8c8]">
            <div class="w-[29px] flex items-center justify-center"><svg class="w-3.5 h-4"><use href="#portrait" /></svg></div>
            <div class="grow bg-[#2e2e2e] flex items-center justify-center"><svg class="w-4 h-3.5"><use href="#landscape" /></svg></div>
          </div>
        </div>
        <div class="mt-[20px] ml-[3px] flex items-center font-bold text-[#f0f0f0]">
          <div class="w-3 h-[13px] mr-[5px] rounded-[2px] bg-[#c8c8c8]"><svg class="w-3 h-[13px]" viewBox="0 0 12 13"><path d="M2.500 6.500l2.500 3 4.500-6" fill="none" stroke="#333" stroke-width="1.800" /></svg></div>
          随画板移动图稿
        </div>
      </div>
      <div class="h-0.5 shrink-0 bg-[#4a4a4a]"></div>

      <div class="grow pl-2.5 pt-3.5">
        <div class="text-[#b8b8b8]">快速操作</div>
        <div class="mt-[9px] flex gap-2.5 font-bold">
          <div class="w-[100px] h-[21px] rounded-[3px] border border-[#858585] flex items-center justify-center pt-0.5 text-[#f0f0f0]">画板选项</div>
          <div class="w-[100px] h-[21px] rounded-[3px] bg-[#585858] flex items-center justify-center pt-0.5 text-[#6a6a6a]">全部重新排列</div>
        </div>
      </div>
      <div class="h-[8px] shrink-0 border-t-2 border-[#3a3a3a] flex justify-center pt-px"><svg class="w-5 h-1"><use href="#grip" /></svg></div>
    </section>

    <!-- highlight frame -->
    <div class="absolute left-[693px] top-[419px] w-[168px] h-[56px] border-3 border-[#fd3936]"></div>

    <!-- watermark -->
    <svg class="absolute left-[799px] top-[579px] w-[200px] h-[110px]" viewBox="800 580 200 110" fill="#cfcfcf">
      <text x="804" y="644.500" class="text-[42px] font-bold font-['Liberation_Sans',sans-serif]" textLength="66" lengthAdjust="spacingAndGlyphs" stroke="#cfcfcf">Bai</text>
      <ellipse cx="876.500" cy="610" rx="6.500" ry="9" />
      <ellipse cx="889.500" cy="596.500" rx="6.500" ry="9" />
      <ellipse cx="906" cy="597.500" rx="6.500" ry="8.500" transform="rotate(8 906 597.500)" />
      <ellipse cx="917" cy="613.500" rx="6.500" ry="8.500" />
      <path d="M896 611c8 0 10 7 15 11 6 5 9 9 8 15-1 7-7 9-12 8-7-1.500-14-1.500-21 0-6 1-11-1-12-7-1-7 3-11 7-15s8-12 15-12z" />
      <text x="879.500" y="640.500" class="text-[27px] font-['Liberation_Sans',sans-serif]" textLength="31" lengthAdjust="spacingAndGlyphs" fill="#535353" stroke="#535353" stroke-width=".9">du</text>
      <text x="925" y="641" class="text-[31px] font-bold font-['Noto_Sans_CJK_SC',sans-serif]" textLength="64">经验</text>
      <text x="806" y="670" class="text-[20px] font-['Open_Sans',sans-serif]" textLength="186" lengthAdjust="spacingAndGlyphs" fill="#e0e0e0" stroke="#e0e0e0" stroke-width=".3">jingyan.baidu.com</text>
    </svg>
  </div>
</body>

</html>
